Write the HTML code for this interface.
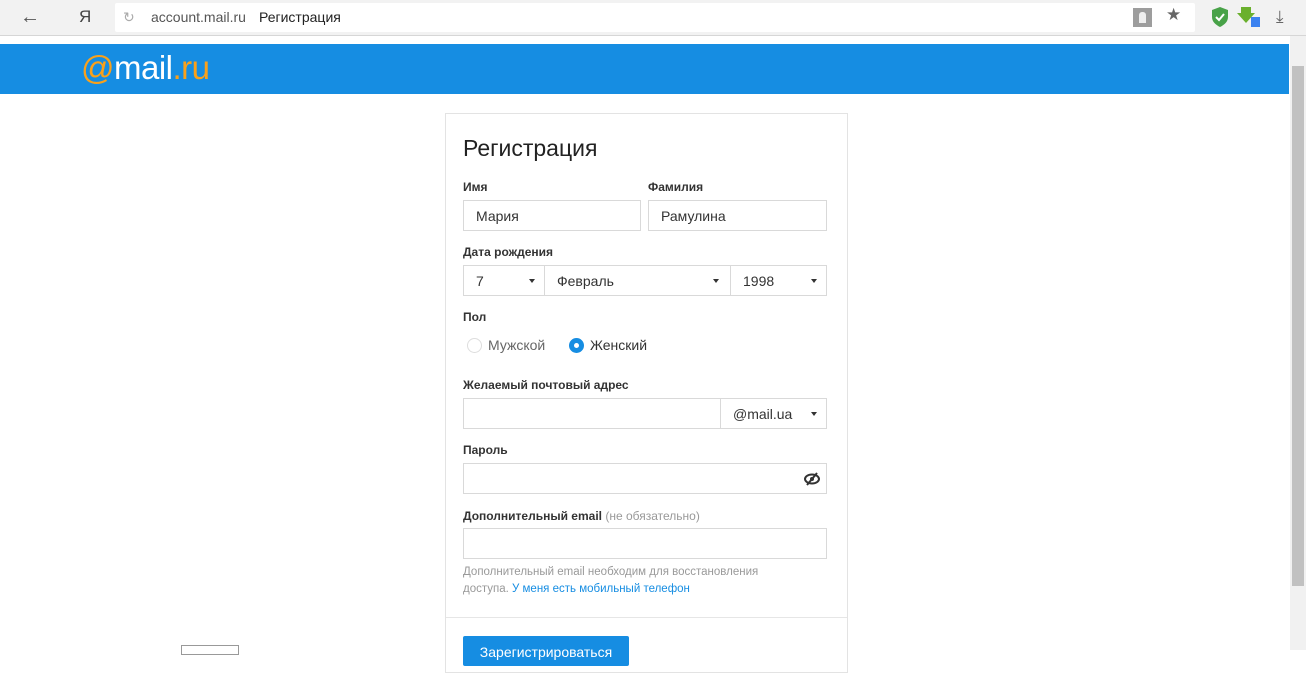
<!DOCTYPE html>
<html><head><meta charset="utf-8"><style>
*{box-sizing:border-box;margin:0;padding:0}
body{width:1306px;height:650px;overflow:hidden;background:#fff;font-family:"Liberation Sans",Arial,sans-serif;position:relative;color:#333}
.abs{position:absolute}
.tb{left:0;top:0;width:1306px;height:36px;background:#f2f2f2;border-bottom:1px solid #d6d6d6}
.url{left:115px;top:3px;width:1080px;height:29px;background:#fff;border-radius:2px}
.hdr{left:0;top:44px;width:1289px;height:50px;background:#168de2}
.sb{left:1290px;top:36px;width:16px;height:614px;background:#f1f1f1}
.form{left:445px;top:113px;width:403px;height:560px;border:1px solid #e3e3e3;background:#fff}
.lbl{font-size:12px;font-weight:bold;color:#333}
.inp{border:1px solid #d9d9d9;height:31px;font-size:14px;color:#333;padding:7px 12px;background:#fff}
.arr{position:absolute;width:0;height:0;border-left:3.5px solid transparent;border-right:3.5px solid transparent;border-top:4px solid #333}
</style></head><body>
<div class="abs tb"></div>
<div class="abs" style="left:20px;top:6px;font-size:20px;color:#555">&#8592;</div>
<div class="abs" style="left:79px;top:7px;font-size:17px;color:#444">Я</div>
<div class="abs url"></div>
<div class="abs" style="left:123px;top:9px;font-size:14px;color:#aaa">&#8635;</div>
<div class="abs" style="left:151px;top:9px;font-size:14px;color:#555">account.mail.ru</div>
<div class="abs" style="left:259px;top:9px;font-size:14px;color:#222">Регистрация</div>
<div class="abs" style="left:1133px;top:8px;width:19px;height:19px;background:#9d9d9d"></div>
<div class="abs" style="left:1139px;top:12px;width:7px;height:11px;background:#eee;border-radius:3px 3px 0 0"></div>
<div class="abs" style="left:1166px;top:5px;font-size:17px;color:#666">★</div>
<svg class="abs" style="left:1210px;top:6px" width="20" height="22"><path d="M10 1L2 4v7c0 5 4 8 8 10 4-2 8-5 8-10V4z" fill="#48a248"/><path d="M6 11l3 3 5-6" stroke="#fff" stroke-width="2" fill="none"/></svg>
<svg class="abs" style="left:1237px;top:5px" width="26" height="24"><path d="M4 2h10v6h4L9 18 0 8h4z" fill="#6ab02d"/><rect x="14" y="12" width="9" height="10" fill="#3b82f0"/></svg>
<div class="abs" style="left:1276px;top:7px;font-size:17px;color:#666">⤓</div>
<div class="abs hdr"></div>
<div class="abs" style="left:81px;top:49px;font-size:33px;color:#fff;letter-spacing:-0.5px"><span style="color:#f9a11b">@</span>mail<span style="color:#f9a11b">.ru</span></div>
<div class="abs sb"><div style="position:absolute;left:2px;top:30px;width:12px;height:520px;background:#c1c1c1"></div></div>
<div class="abs form"></div>
<div class="abs" style="left:463px;top:135px;font-size:23px;color:#222">Регистрация</div>
<div class="abs lbl" style="left:463px;top:180px">Имя</div>
<div class="abs lbl" style="left:648px;top:180px">Фамилия</div>
<div class="abs inp" style="left:463px;top:200px;width:178px">Мария</div>
<div class="abs inp" style="left:648px;top:200px;width:179px">Рамулина</div>
<div class="abs lbl" style="left:463px;top:245px">Дата рождения</div>
<div class="abs inp" style="left:463px;top:265px;width:82px">7<i class="arr" style="left:65px;top:13px"></i></div>
<div class="abs inp" style="left:544px;top:265px;width:187px">Февраль<i class="arr" style="left:168px;top:13px"></i></div>
<div class="abs inp" style="left:730px;top:265px;width:97px">1998<i class="arr" style="left:80px;top:13px"></i></div>
<div class="abs lbl" style="left:463px;top:310px">Пол</div>
<div class="abs" style="left:467px;top:338px;width:15px;height:15px;border:1px solid #ddd;border-radius:50%"></div>
<div class="abs" style="left:488px;top:337px;font-size:14px;color:#666">Мужской</div>
<div class="abs" style="left:569px;top:338px;width:15px;height:15px;background:#168de2;border-radius:50%"><div style="margin:5px;width:5px;height:5px;background:#fff;border-radius:50%"></div></div>
<div class="abs" style="left:590px;top:337px;font-size:14px;color:#333">Женский</div>
<div class="abs lbl" style="left:463px;top:378px">Желаемый почтовый адрес</div>
<div class="abs inp" style="left:463px;top:398px;width:258px"></div>
<div class="abs inp" style="left:720px;top:398px;width:107px">@mail.ua<i class="arr" style="left:90px;top:13px"></i></div>
<div class="abs lbl" style="left:463px;top:443px">Пароль</div>
<div class="abs inp" style="left:463px;top:463px;width:364px"></div>
<svg class="abs" style="left:803px;top:471px" width="18" height="16"><ellipse cx="9" cy="8" rx="7" ry="4.5" fill="none" stroke="#333" stroke-width="2"/><circle cx="9" cy="8" r="2" fill="#333"/><path d="M14 2L4 14" stroke="#333" stroke-width="2"/></svg>
<div class="abs" style="left:463px;top:509px;font-size:12px"><b>Дополнительный email</b> <span style="color:#999">(не обязательно)</span></div>
<div class="abs inp" style="left:463px;top:528px;width:364px"></div>
<div class="abs" style="left:463px;top:564px;font-size:11.5px;color:#999;line-height:17px;width:360px">Дополнительный email необходим для восстановления<br>доступа. <span style="color:#168de2">У меня есть мобильный телефон</span></div>
<div class="abs" style="left:446px;top:617px;width:401px;height:1px;background:#e6e6e6"></div>
<div class="abs" style="left:463px;top:636px;width:166px;height:30px;background:#168de2;border-radius:2px;color:#fff;font-size:14px;text-align:center;padding-top:8px">Зарегистрироваться</div>
<div class="abs" style="left:181px;top:645px;width:58px;height:10px;border:1px solid #999"></div>
</body></html>
